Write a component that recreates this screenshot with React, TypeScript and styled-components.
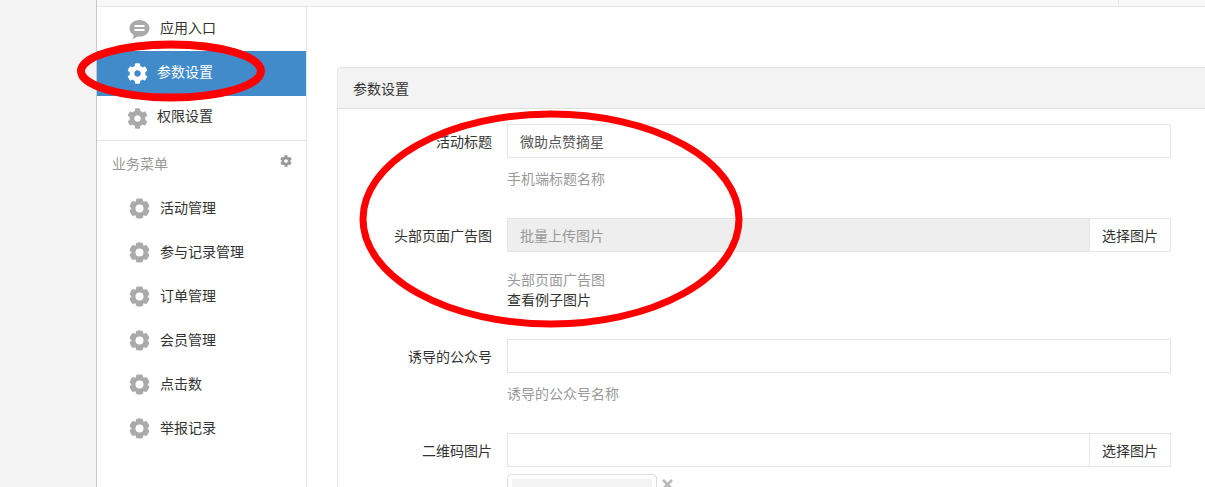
import React from 'react';
import styled, { createGlobalStyle } from 'styled-components';
import { FaCog, FaTimes } from 'react-icons/fa';

const GlobalStyle = createGlobalStyle`
  html, body {
    margin: 0;
    height: 100%;
    overflow: hidden;
    background: #fff;
  }
  body {
    font: 14px/20px "Noto Sans CJK SC", "Liberation Sans", sans-serif;
    color: #333;
  }
`;

const Page = styled.div`
  position: relative;
  display: flex;
  width: 1205px;
  height: 487px;
  overflow: hidden;
`;

const Gutter = styled.div`
  flex: none;
  width: 96px;
  background: #f3f3f3;
  border-right: 1px solid #c8c8c8;
`;

const Content = styled.div`
  flex: 1;
  min-width: 0;
  display: flex;
  flex-direction: column;
`;

const TopBar = styled.div`
  flex: none;
  height: 6px;
  display: flex;
  justify-content: flex-end;
  background: #f8f8f8;
  border-bottom: 1px solid #e5e5e5;
`;

const TopCell = styled.div`
  width: 86px;
  border-left: 1px solid #e5e5e5;
`;

const Body = styled.div`
  flex: 1;
  display: flex;
  min-height: 0;
`;

const Sidebar = styled.nav`
  flex: none;
  width: 209px;
  border-right: 1px solid #e5e5e5;
`;

const MenuItem = styled.div<{ $active?: boolean; $indent: number; $gap: number }>`
  display: flex;
  align-items: center;
  height: ${(p) => (p.$active ? 45 : 44)}px;
  padding-left: ${(p) => p.$indent}px;
  gap: ${(p) => p.$gap}px;
  background: ${(p) => (p.$active ? '#428bca' : 'transparent')};
  color: ${(p) => (p.$active ? '#fff' : '#333')};

  svg {
    flex: none;
    width: 21px;
    height: 21px;
    color: ${(p) => (p.$active ? '#fff' : '#aaa')};
  }
`;

const MenuText = styled.span<{ $lift: number }>`
  margin-bottom: ${(p) => p.$lift * 2}px;
`;

const TopGroup = styled.div`
  border-bottom: 1px solid #e5e5e5;
`;

const GroupTitle = styled.div`
  display: flex;
  justify-content: space-between;
  height: 45px;
  padding: 12px 14px 0 15px;
  box-sizing: border-box;
  color: #999;

  svg {
    width: 12px;
    height: 12px;
    margin-top: 2px;
    color: #999;
  }
`;

const Main = styled.main`
  flex: 1;
  min-width: 0;
  padding: 60px 0 0 30px;
  overflow: hidden;
`;

const Panel = styled.section`
  width: 920px;
  border: 1px solid #e5e5e5;
  border-radius: 3px 0 0 0;
`;

const PanelHead = styled.header`
  height: 41px;
  padding: 10px 15px 0;
  box-sizing: border-box;
  background: #f3f3f3;
  border-bottom: 1px solid #e0e0e0;
`;

const PanelBody = styled.div`
  padding-top: 15px;
`;

const FormRow = styled.div<{ $height: number }>`
  display: flex;
  height: ${(p) => p.$height}px;
`;

const Label = styled.label`
  flex: none;
  width: 154px;
  margin-right: 15px;
  line-height: 34px;
  text-align: right;
`;

const Field = styled.div`
  width: 664px;
`;

const InputBox = styled.div<{ $disabled?: boolean }>`
  display: flex;
  height: 32px;
  width: 662px;
  border: 1px solid #e5e5e5;
  background: ${(p) => (p.$disabled ? '#eee' : '#fff')};
  color: ${(p) => (p.$disabled ? '#999' : '#555')};
`;

const InputText = styled.div`
  flex: 1;
  padding-left: 12px;
  line-height: 32px;
`;

const Addon = styled.div`
  flex: none;
  width: 81px;
  box-sizing: border-box;
  text-align: center;
  line-height: 32px;
  color: #333;
  background: #fff;
  border-left: 1px solid #e5e5e5;
`;

const Help = styled.div<{ $gap: number }>`
  margin-top: ${(p) => p.$gap}px;
  color: #999;
`;

const ExampleLink = styled.div`
  color: #333;
`;

const ThumbRow = styled.div`
  display: flex;
  align-items: flex-start;
  gap: 5px;
  margin-top: 7px;
`;

const Thumb = styled.div`
  width: 140px;
  height: 60px;
  padding: 4px;
  border: 1px solid #ddd;
  border-radius: 4px;

  &::before {
    content: '';
    display: block;
    height: 100%;
    background: #f3f3f3;
  }
`;

const RemoveButton = styled.span`
  display: flex;
  margin-top: 3px;
  color: #bbb;

  svg {
    width: 11px;
    height: 15px;
  }
`;

const Scribbles = styled.svg`
  position: absolute;
  inset: 0;
  pointer-events: none;
`;

const ChatIcon = () => (
  <svg viewBox="0 0 21 21" fill="currentColor">
    <path d="M10.5 1C4.9 1 .5 4.6.5 9.3c0 2.900 1.700 5.400 4.200 6.900-.1 1.300-.7 2.600-1.500 3.600 2-.2 3.900-1.100 5.400-2.300.6.1 1.200.1 1.900.1 5.600 0 10-3.700 10-8.300S16.100 1 10.500 1z" />
    <rect x="5.500" y="6" width="10" height="2" fill="#fff" />
    <rect x="5.500" y="10" width="10" height="2" fill="#fff" />
  </svg>
);

const lobes = [0, 60, 120, 180, 240, 300];

const RingGear = () => (
  <svg viewBox="0 0 21 21">
    <g fill="currentColor">
      <circle cx="10.5" cy="10.5" r="8" />
      {lobes.map((angle) => (
        <rect
          key={angle}
          x="6.800"
          y="0.500"
          width="7.400"
          height="5"
          rx="2.200"
          transform={`rotate(${angle} 10.5 10.5)`}
        />
      ))}
    </g>
    <circle cx="10.5" cy="10.5" r="4" fill="#fff" />
  </svg>
);

const businessMenu = ['活动管理', '参与记录管理', '订单管理', '会员管理', '点击数', '举报记录'];

export default function App() {
  return (
    <>
      <GlobalStyle />
      <Page>
        <Gutter />
        <Content>
          <TopBar>
            <TopCell />
          </TopBar>
          <Body>
            <Sidebar>
              <TopGroup>
                <MenuItem $indent={32} $gap={10}>
                  <ChatIcon />
                  <MenuText $lift={2}>应用入口</MenuText>
                </MenuItem>
                <MenuItem $active $indent={30} $gap={9}>
                  <FaCog />
                  <MenuText $lift={3}>参数设置</MenuText>
                </MenuItem>
                <MenuItem $indent={30} $gap={9}>
                  <FaCog />
                  <MenuText $lift={3}>权限设置</MenuText>
                </MenuItem>
              </TopGroup>
              <GroupTitle>
                业务菜单
                <FaCog />
              </GroupTitle>
              {businessMenu.map((name) => (
                <MenuItem key={name} $indent={32} $gap={10}>
                  <RingGear />
                  <MenuText $lift={1}>{name}</MenuText>
                </MenuItem>
              ))}
            </Sidebar>
            <Main>
              <Panel>
                <PanelHead>参数设置</PanelHead>
                <PanelBody>
                  <FormRow $height={94}>
                    <Label>活动标题</Label>
                    <Field>
                      <InputBox>
                        <InputText>微助点赞摘星</InputText>
                      </InputBox>
                      <Help $gap={10}>手机端标题名称</Help>
                    </Field>
                  </FormRow>
                  <FormRow $height={121}>
                    <Label>头部页面广告图</Label>
                    <Field>
                      <InputBox $disabled>
                        <InputText>批量上传图片</InputText>
                        <Addon>选择图片</Addon>
                      </InputBox>
                      <Help $gap={17}>头部页面广告图</Help>
                      <ExampleLink>查看例子图片</ExampleLink>
                    </Field>
                  </FormRow>
                  <FormRow $height={94}>
                    <Label>诱导的公众号</Label>
                    <Field>
                      <InputBox>
                        <InputText />
                      </InputBox>
                      <Help $gap={10}>诱导的公众号名称</Help>
                    </Field>
                  </FormRow>
                  <FormRow $height={100}>
                    <Label>二维码图片</Label>
                    <Field>
                      <InputBox>
                        <InputText />
                        <Addon>选择图片</Addon>
                      </InputBox>
                      <ThumbRow>
                        <Thumb />
                        <RemoveButton>
                          <FaTimes />
                        </RemoveButton>
                      </ThumbRow>
                    </Field>
                  </FormRow>
                </PanelBody>
              </Panel>
            </Main>
          </Body>
        </Content>
        <Scribbles width="1205" height="487" viewBox="0 0 1205 487">
          <ellipse cx="171" cy="71" rx="90" ry="26.5" fill="none" stroke="#f00" strokeWidth="8" />
          <ellipse cx="551" cy="219" rx="188" ry="105" fill="none" stroke="#f00" strokeWidth="7" />
        </Scribbles>
      </Page>
    </>
  );
}
